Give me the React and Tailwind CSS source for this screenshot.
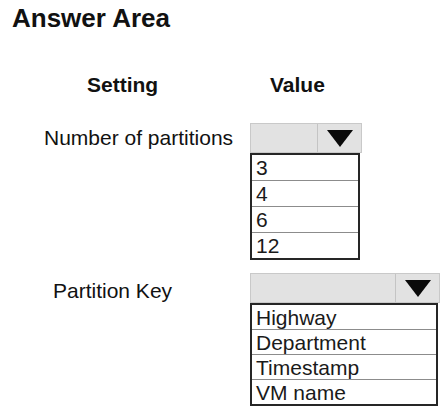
function Triangle() {
  return (
    <svg width="26" height="17" viewBox="0 0 26 17">
      <polygon points="0,0 26,0 13,17" fill="#0a0a0a" />
    </svg>
  );
}

function Dropdown({ width, options, rowHeight }) {
  return (
    <div className="flex flex-col" style={{ width }}>
      <div className="flex h-[30px] bg-[#e2e2e2] border border-[#c9c9c9]">
        <div className="flex-1 border-r border-[#c4c4c4]" />
        <div className="w-[43px] flex items-center justify-center">
          <Triangle />
        </div>
      </div>
      <div className="mr-[2px] border-2 border-[#262626] bg-white">
        {options.map((o, i) => (
          <div
            key={o}
            className={
              "pl-[4px] flex items-center text-[21px] leading-none text-[#1a1a1a] " +
              (i > 0 ? "border-t border-[#8c8c8c]" : "")
            }
            style={{ height: rowHeight + (i > 0 ? 1 : 0) }}
          >
            {o}
          </div>
        ))}
      </div>
    </div>
  );
}

export default function App() {
  return (
    <div className="w-[446px] h-[415px] bg-white text-[#111] font-['Liberation_Sans',Arial,sans-serif] overflow-hidden">
      <div className="pt-[5px] pl-[12px] text-[26px] leading-[26px] font-bold">Answer Area</div>

      <div className="mt-[43px] flex text-[21px] leading-[21px] font-bold">
        <div className="pl-[87px] w-[270px]">Setting</div>
        <div>Value</div>
      </div>

      <div className="mt-[28px] flex">
        <div className="w-[250px] pl-[44px] pt-[4px] text-[21px] leading-[21px]">Number of partitions</div>
        <Dropdown width={112} rowHeight={25} options={["3", "4", "6", "12"]} />
      </div>

      <div className="mt-[13px] flex">
        <div className="w-[250px] pl-[53px] pt-[7px] text-[21px] leading-[21px]">Partition Key</div>
        <Dropdown width={190} rowHeight={24} options={["Highway", "Department", "Timestamp", "VM name"]} />
      </div>
    </div>
  );
}
